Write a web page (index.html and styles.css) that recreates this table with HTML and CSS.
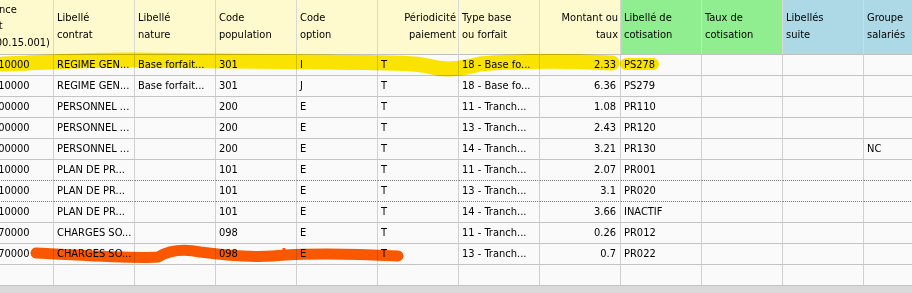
FILE: index.html
```html
<!DOCTYPE html>
<html lang="fr">
<head>
<meta charset="utf-8">
<title>Cotisations</title>
<link rel="stylesheet" href="styles.css">
</head>
<body>
<div class="grid-view">
  <div class="grid-scroll">
    <table class="grid">
      <colgroup>
        <col class="c"><col class="c"><col class="c"><col class="c"><col class="c"><col class="c">
        <col class="c"><col class="c"><col class="c"><col class="c"><col class="c"><col class="c">
      </colgroup>
      <thead>
        <tr>
          <th class="h-yellow"><span class="scrolled">Référence<br>contrat<br>(P00000.15.001)</span></th>
          <th class="h-yellow">Libellé<br>contrat</th>
          <th class="h-yellow">Libellé<br>nature</th>
          <th class="h-yellow">Code<br>population</th>
          <th class="h-yellow">Code<br>option</th>
          <th class="h-yellow right">Périodicité<br>paiement</th>
          <th class="h-yellow">Type base<br>ou forfait</th>
          <th class="h-yellow right">Montant ou<br>taux</th>
          <th class="h-green">Libellé de<br>cotisation</th>
          <th class="h-green">Taux de<br>cotisation</th>
          <th class="h-blue">Libellés<br>suite</th>
          <th class="h-blue">Groupe<br>salariés</th>
        </tr>
      </thead>
      <tbody>
        <tr><td class="ref">000010000</td><td>REGIME GEN...</td><td>Base forfait...</td><td>301</td><td>I</td><td>T</td><td>18 - Base fo...</td><td class="right">2.33</td><td>PS278</td><td></td><td></td><td></td></tr>
        <tr><td class="ref">000010000</td><td>REGIME GEN...</td><td>Base forfait...</td><td>301</td><td>J</td><td>T</td><td>18 - Base fo...</td><td class="right">6.36</td><td>PS279</td><td></td><td></td><td></td></tr>
        <tr><td class="ref">000000000</td><td>PERSONNEL ...</td><td></td><td>200</td><td>E</td><td>T</td><td>11 - Tranch...</td><td class="right">1.08</td><td>PR110</td><td></td><td></td><td></td></tr>
        <tr><td class="ref">000000000</td><td>PERSONNEL ...</td><td></td><td>200</td><td>E</td><td>T</td><td>13 - Tranch...</td><td class="right">2.43</td><td>PR120</td><td></td><td></td><td></td></tr>
        <tr><td class="ref">000000000</td><td>PERSONNEL ...</td><td></td><td>200</td><td>E</td><td>T</td><td>14 - Tranch...</td><td class="right">3.21</td><td>PR130</td><td></td><td></td><td>NC</td></tr>
        <tr class="before-focus"><td class="ref">000010000</td><td>PLAN DE PR...</td><td></td><td>101</td><td>E</td><td>T</td><td>11 - Tranch...</td><td class="right">2.07</td><td>PR001</td><td></td><td></td><td></td></tr>
        <tr class="focus"><td class="ref">000010000</td><td>PLAN DE PR...</td><td></td><td>101</td><td>E</td><td>T</td><td>13 - Tranch...</td><td class="right">3.1</td><td>PR020</td><td></td><td></td><td></td></tr>
        <tr><td class="ref">000010000</td><td>PLAN DE PR...</td><td></td><td>101</td><td>E</td><td>T</td><td>14 - Tranch...</td><td class="right">3.66</td><td>INACTIF</td><td></td><td></td><td></td></tr>
        <tr><td class="ref">000070000</td><td>CHARGES SO...</td><td></td><td>098</td><td>E</td><td>T</td><td>11 - Tranch...</td><td class="right">0.26</td><td>PR012</td><td></td><td></td><td></td></tr>
        <tr><td class="ref">000070000</td><td>CHARGES SO...</td><td></td><td>098</td><td>E</td><td>T</td><td>13 - Tranch...</td><td class="right">0.7</td><td>PR022</td><td></td><td></td><td></td></tr>
        <tr><td></td><td></td><td></td><td></td><td></td><td></td><td></td><td></td><td></td><td></td><td></td><td></td></tr>
      </tbody>
    </table>
  </div>
  <div class="hscroll"></div>
  <svg class="marks" width="912" height="293" viewBox="0 0 912 293" aria-hidden="true">
    <path class="mark-yellow" d="M3,64 C40,63 90,59 135,60 C200,61 260,61 330,62 C380,63 410,62 428,66 C445,71 460,69 480,64 C530,60 580,61 612,63"/>
    <path class="mark-yellow thin" d="M626,64 L653,64"/>
    <path class="mark-orange" d="M36,253 C80,255 130,259 158,257 C170,250 185,249 200,252 C230,256 260,258 285,255 C320,253 360,254 398,256"/>
    <path class="mark-orange spike" d="M200,252 L200,247 M284,254 L284,248"/>
  </svg>
</div>
</body>
</html>
```
FILE: styles.css
```css
html, body {
  margin: 0;
  padding: 0;
  background: #fafafa;
}

.grid-view {
  position: relative;
  width: 912px;
  height: 293px;
  overflow: hidden;
  font-family: "DejaVu Sans Condensed", "DejaVu Sans", sans-serif;
  font-stretch: condensed;
  font-size: 11px;
  color: #000;
}

.grid-scroll {
  width: 912px;
  height: 286px;
  overflow: hidden;
}

.grid {
  margin-left: -27px;
  border-collapse: separate;
  border-spacing: 0;
  table-layout: fixed;
  width: 972px;
}

.grid col.c {
  width: 81px;
}

.grid th,
.grid td {
  box-sizing: border-box;
  padding: 0 3px;
  border-right: 1px solid #d0d0d0;
  border-bottom: 1px solid #c4c4c4;
  white-space: nowrap;
  overflow: hidden;
  text-align: left;
  font-weight: normal;
}

.grid th {
  height: 55px;
  line-height: 16.5px;
  vertical-align: middle;
  padding-bottom: 1px;
  border-right-color: #d8d8d8;
  border-bottom-color: #c0c0c0;
}

.grid th .scrolled {
  display: block;
  margin-left: -9px;
}

.grid td {
  height: 21px;
  line-height: 20px;
  background: #fafafa;
}

.grid td.ref {
  text-indent: -3px;
}

.grid .right {
  text-align: right;
  padding-right: 4px;
}

.grid th.right {
  padding-right: 2px;
}

.h-yellow { background: #fffacd; }
.h-green { background: #90ee90; }
.h-blue { background: #add8e6; }

.grid tr.before-focus td,
.grid tr.focus td {
  border-bottom: 1px dotted #7a7a7a;
}

.hscroll {
  height: 7px;
  background: #dadada;
}

.marks {
  position: absolute;
  left: 0;
  top: 0;
  pointer-events: none;
  mix-blend-mode: multiply;
}

.mark-yellow {
  fill: none;
  stroke: #ffe800;
  stroke-width: 15;
  stroke-linecap: round;
  stroke-linejoin: round;
}

.mark-yellow.thin {
  stroke-width: 12;
}

.mark-orange {
  fill: none;
  stroke: #ff5a00;
  stroke-width: 11;
  stroke-linecap: round;
  stroke-linejoin: round;
}

.mark-orange.spike {
  stroke-width: 3;
  stroke-linecap: butt;
}
```
